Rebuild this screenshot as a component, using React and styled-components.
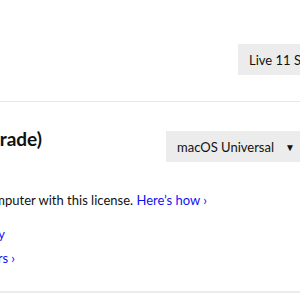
import React from 'react';
import styled, { createGlobalStyle } from 'styled-components';

const Global = createGlobalStyle`
  body {
    margin: 0;
    background: #fff;
  }
`;

const Page = styled.div`
  width: 300px;
  height: 300px;
  overflow: hidden;
  background: #fff;
  color: #111;
  font-family: Lato, "Noto Sans", sans-serif;
`;

const TopBar = styled.div`
  height: 102px;
  box-sizing: border-box;
  padding: 44px 0 0 238px;
  border-bottom: 1px solid #e8e8e8;
  display: flex;
  align-items: flex-start;
`;

const TabButton = styled.button`
  height: 31px;
  padding: 0 11px;
  border: 0;
  background: #ececec;
  font: 400 13px Lato, "Noto Sans", sans-serif;
  color: #111;
  white-space: nowrap;
  flex-shrink: 0;
`;

const Product = styled.section`
  border-bottom: 2px solid #ececec;
  padding-bottom: 21px;
`;

const HeadRow = styled.div`
  width: 306px;
  display: flex;
  justify-content: space-between;
  align-items: flex-start;
  padding-top: 25px;
`;

/* keeps the visible end of a clipped line at a given x */
const Clip = styled.div`
  width: ${(p) => p.end}px;
  display: flex;
  justify-content: flex-end;
  white-space: nowrap;
  margin-top: ${(p) => p.top || 0}px;
`;

const Title = styled.h2`
  margin: 0;
  font-size: 19px;
  line-height: 24px;
  font-weight: 700;
  flex-shrink: 0;
`;

const Select = styled.div`
  width: 140px;
  height: 31px;
  margin-top: 4px;
  box-sizing: border-box;
  padding: 0 11px;
  background: #ececec;
  display: flex;
  align-items: center;
  justify-content: space-between;
  font-size: 13px;
  white-space: nowrap;
  flex-shrink: 0;
`;

const Caret = styled.span`
  font-size: 10px;
`;

const Text = styled.p`
  margin: 0;
  font-size: 13px;
  line-height: ${(p) => p.lh || 20}px;
  flex-shrink: 0;
`;

const Link = styled.a`
  color: #1010f8;
  text-decoration: none;
`;

export default function App() {
  return (
    <Page>
      <Global />
      <TopBar>
        <TabButton>Live 11 Suite</TabButton>
      </TopBar>
      <Product>
        <HeadRow>
          <Clip end={42}>
            <Title>Live 11 Suite (Upgrade)</Title>
          </Clip>
          <Select>
            macOS Universal
            <Caret>▼</Caret>
          </Select>
        </HeadRow>
        <Clip end={207} top={28}>
          <Text>
            You can install Live on more than one computer with this license.{' '}
            <Link href="#">Here’s how ›</Link>
          </Text>
        </Clip>
        <Clip end={5} top={12}>
          <Text lh={24}>
            <Link href="#">Download Live 11 Suite directly</Link>
          </Text>
        </Clip>
        <Clip end={15}>
          <Text lh={24}>
            <Link href="#">Other versions and installers ›</Link>
          </Text>
        </Clip>
      </Product>
    </Page>
  );
}
